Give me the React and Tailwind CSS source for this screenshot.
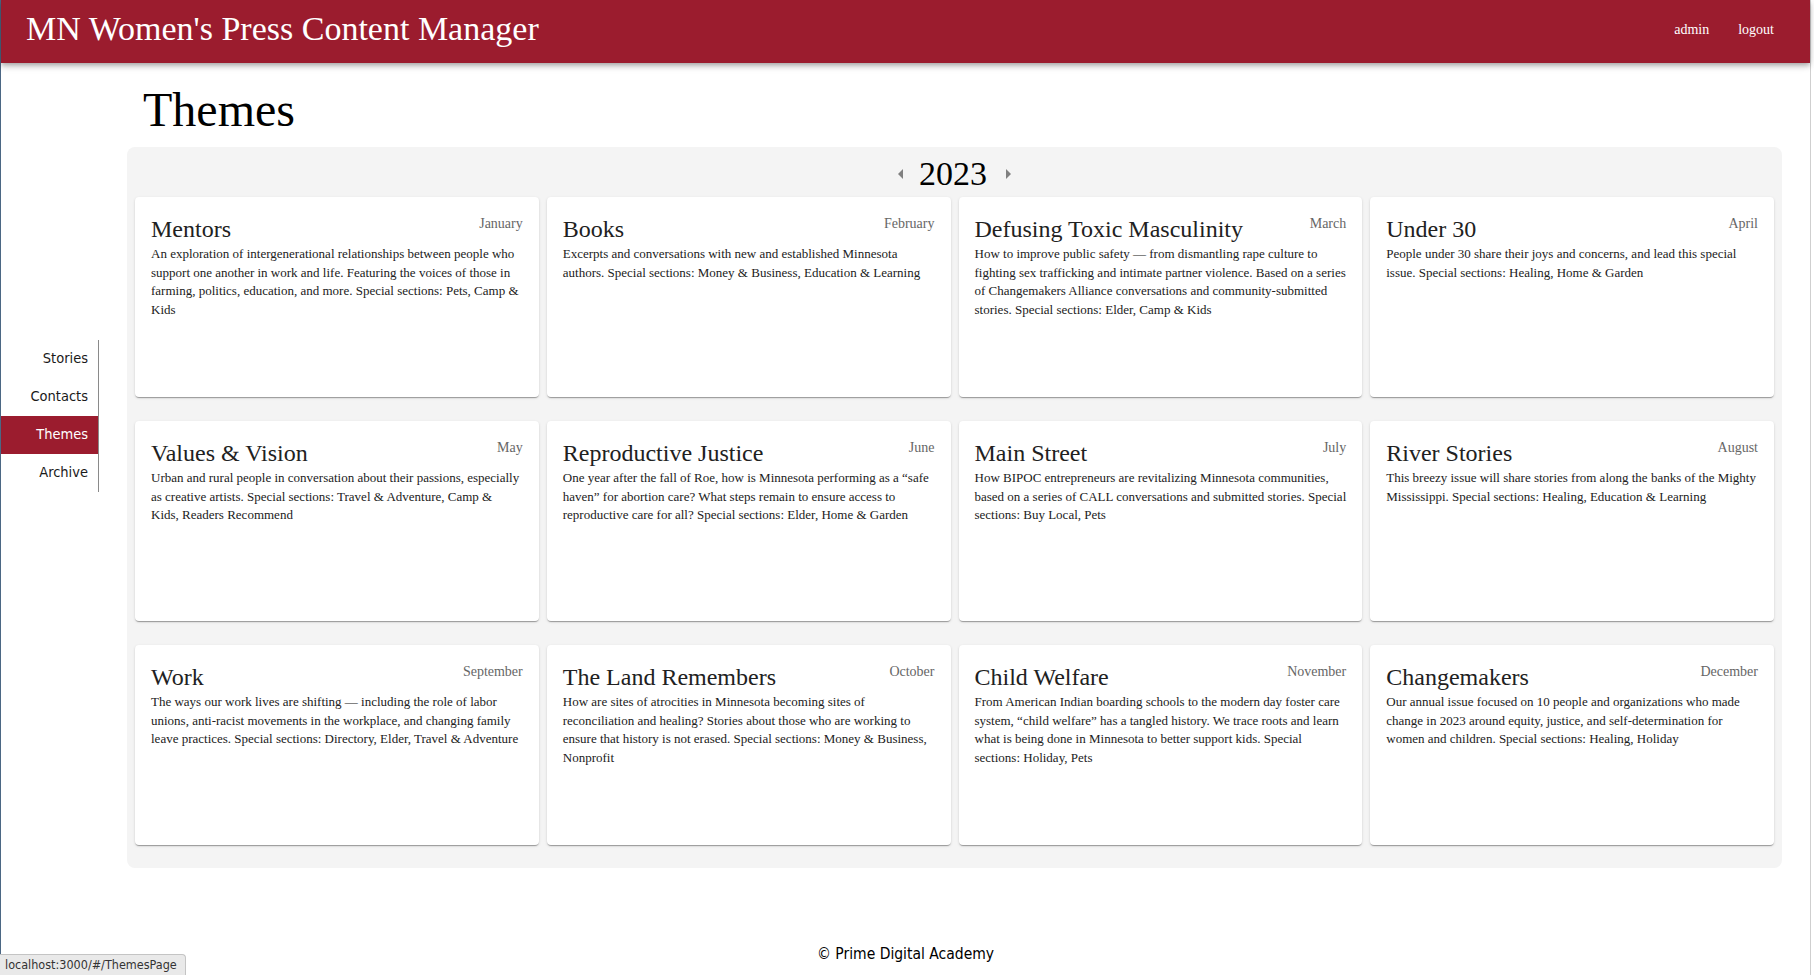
import React from "react";

const themes = [
  { title: "Mentors", month: "January", text: "An exploration of intergenerational relationships between people who support one another in work and life. Featuring the voices of those in farming, politics, education, and more. Special sections: Pets, Camp & Kids" },
  { title: "Books", month: "February", text: "Excerpts and conversations with new and established Minnesota authors. Special sections: Money & Business, Education & Learning" },
  { title: "Defusing Toxic Masculinity", month: "March", text: "How to improve public safety — from dismantling rape culture to fighting sex trafficking and intimate partner violence. Based on a series of Changemakers Alliance conversations and community-submitted stories. Special sections: Elder, Camp & Kids" },
  { title: "Under 30", month: "April", text: "People under 30 share their joys and concerns, and lead this special issue. Special sections: Healing, Home & Garden" },
  { title: "Values & Vision", month: "May", text: "Urban and rural people in conversation about their passions, especially as creative artists. Special sections: Travel & Adventure, Camp & Kids, Readers Recommend" },
  { title: "Reproductive Justice", month: "June", text: "One year after the fall of Roe, how is Minnesota performing as a “safe haven” for abortion care? What steps remain to ensure access to reproductive care for all? Special sections: Elder, Home & Garden" },
  { title: "Main Street", month: "July", text: "How BIPOC entrepreneurs are revitalizing Minnesota communities, based on a series of CALL conversations and submitted stories. Special sections: Buy Local, Pets" },
  { title: "River Stories", month: "August", text: "This breezy issue will share stories from along the banks of the Mighty Mississippi. Special sections: Healing, Education & Learning" },
  { title: "Work", month: "September", text: "The ways our work lives are shifting — including the role of labor unions, anti-racist movements in the workplace, and changing family leave practices. Special sections: Directory, Elder, Travel & Adventure" },
  { title: "The Land Remembers", month: "October", text: "How are sites of atrocities in Minnesota becoming sites of reconciliation and healing? Stories about those who are working to ensure that history is not erased. Special sections: Money & Business, Nonprofit" },
  { title: "Child Welfare", month: "November", text: "From American Indian boarding schools to the modern day foster care system, “child welfare” has a tangled history. We trace roots and learn what is being done in Minnesota to better support kids. Special sections: Holiday, Pets" },
  { title: "Changemakers", month: "December", text: "Our annual issue focused on 10 people and organizations who made change in 2023 around equity, justice, and self-determination for women and children. Special sections: Healing, Holiday" },
];

const navItems = ["Stories", "Contacts", "Themes", "Archive"];

function ThemeCard({ title, month, text }) {
  return (
    <div className="h-[200px] rounded-[4px] bg-white p-[16px] shadow-[0px_2px_1px_-1px_rgba(0,0,0,0.2),0px_1px_1px_0px_rgba(0,0,0,0.14),0px_1px_3px_0px_rgba(0,0,0,0.12)]">
      <div className="flex items-start justify-between">
        <div className="text-[24px] leading-[32px] text-[#212121]">{title}</div>
        <div className="mt-[1px] text-[14px] leading-[20px] text-[#666666]">{month}</div>
      </div>
      <div className="text-[13px] leading-[18.5px] text-[#212121]">{text}</div>
    </div>
  );
}

export default function App() {
  return (
    <div className="relative flex w-[1814px] h-[975px] bg-white overflow-hidden font-['Liberation_Serif','Times_New_Roman',serif]">
      <div className="flex h-full w-[1811px] flex-col border-l border-r border-l-[#4b6784] border-r-[#cfcfcf]">
        {/* Header */}
        <header className="relative z-10 flex h-[63px] shrink-0 items-start justify-between bg-[#9b1c2e] pl-[25px] pr-[36px] text-white shadow-[0px_2px_4px_-1px_rgba(0,0,0,0.2),0px_4px_5px_0px_rgba(0,0,0,0.14),0px_1px_10px_0px_rgba(0,0,0,0.12)]">
          <div className="mt-[8px] text-[34px] leading-[42px]">MN Women's Press Content Manager</div>
          <div className="mt-[20px] flex gap-[29px] text-[14px] leading-[20px]">
            <span>admin</span>
            <span>logout</span>
          </div>
        </header>

        {/* Body */}
        <div className="flex flex-1">
          <nav className="w-[98px] shrink-0 pt-[277px]">
            <div className="border-r border-[#8a8a8a] font-['DejaVu_Sans_Condensed','DejaVu_Sans',sans-serif] font-stretch-condensed text-[14.5px]">
              {navItems.map((item) => (
                <div
                  key={item}
                  className={
                    item === "Themes"
                      ? "flex h-[38px] items-center justify-end bg-[#9b1c2e] pr-[10px] text-white"
                      : "flex h-[38px] items-center justify-end pr-[10px] text-[#1a1a1a]"
                  }
                >
                  {item}
                </div>
              ))}
            </div>
          </nav>

          <main className="flex-1 px-[28px]">
            <h1 className="mt-[19px] pl-[16px] text-[48px] leading-[56px] text-black">Themes</h1>
            <section className="mt-[9px] rounded-[8px] bg-[#f4f4f4] px-[8px] pb-[23px] pt-[6px]">
              <div className="mb-[2px] flex h-[42px] items-center justify-center">
                <svg viewBox="0 0 24 24" className="mr-[6px] h-[24px] w-[24px]" fill="#808080">
                  <path d="M14 7l-5 5 5 5z" />
                </svg>
                <span className="text-[34px] leading-[42px] text-black">2023</span>
                <svg viewBox="0 0 24 24" className="ml-[9px] h-[24px] w-[24px]" fill="#808080">
                  <path d="M10 17l5-5-5-5z" />
                </svg>
              </div>
              <div className="grid grid-cols-4 gap-x-[8px] gap-y-[24px]">
                {themes.map((t) => (
                  <ThemeCard key={t.title} {...t} />
                ))}
              </div>
            </section>
          </main>
        </div>

        {/* Footer */}
        <footer className="h-[31px] shrink-0 text-center font-['DejaVu_Sans_Condensed','DejaVu_Sans',sans-serif] font-stretch-condensed text-[15.5px] leading-[20px] text-black">
          © Prime Digital Academy
        </footer>
      </div>

      {/* Browser status tooltip */}
      <div className="absolute bottom-0 left-0 flex h-[21px] w-[186px] items-center rounded-tr-[4px] border-r border-t border-[#c4c4c4] bg-[#e9e9e9] pl-[5px] font-['DejaVu_Sans_Condensed','DejaVu_Sans',sans-serif] font-stretch-condensed text-[12.5px] text-[#333]">
        localhost:3000/#/ThemesPage
      </div>
    </div>
  );
}
